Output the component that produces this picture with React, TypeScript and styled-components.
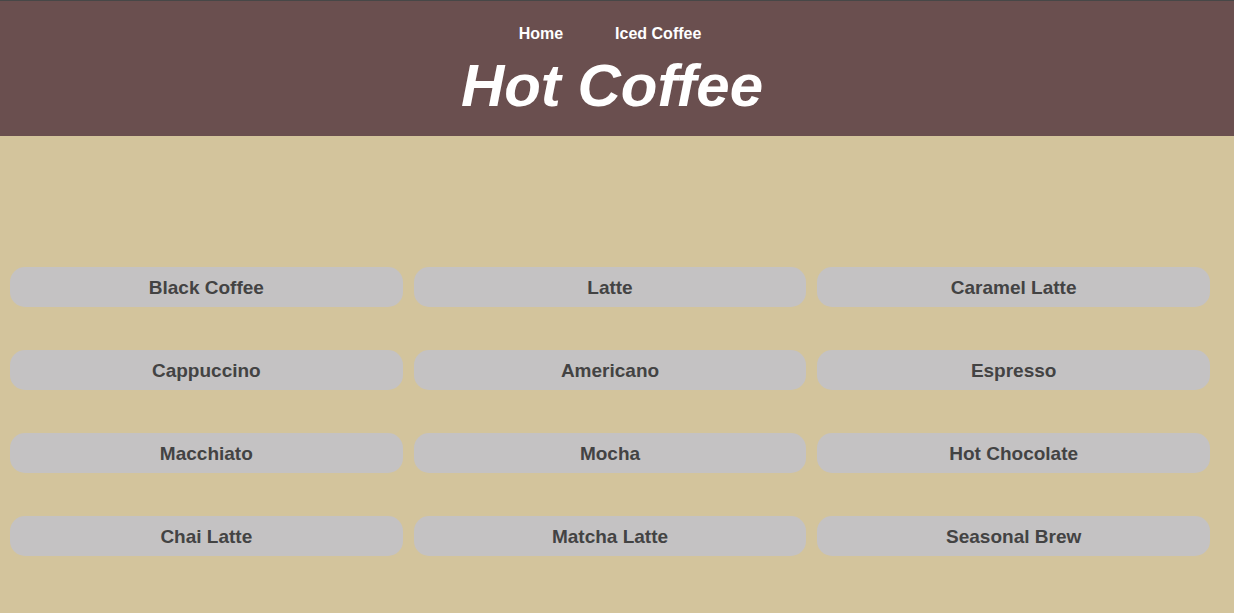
import React from "react";
import styled, { createGlobalStyle } from "styled-components";

const GlobalStyle = createGlobalStyle`
  html, body {
    margin: 0;
    padding: 0;
    background: #d3c49c;
    font-family: "Liberation Sans", Arial, sans-serif;
  }
  * { box-sizing: border-box; }
`;

const Page = styled.div`
  min-height: 613px;
  background: #d3c49c;
`;

const Header = styled.header`
  background: #6a4f4f;
  border-top: 1px solid #474747;
  height: 136px;
  padding-top: 24px;
`;

const Inner = styled.div`
  width: 1220px;
  display: flex;
  flex-direction: column;
  align-items: center;
`;

const Nav = styled.nav`
  display: flex;
  gap: 52px;
  height: 18px;
`;

const NavLink = styled.a`
  color: #ffffff;
  font-weight: bold;
  font-size: 16px;
  line-height: 18px;
  text-decoration: none;
`;

const Title = styled.h1`
  margin: 13px 0 0 4px;
  color: #ffffff;
  font-size: 60px;
  line-height: 60px;
  font-weight: bold;
  font-style: italic;
`;

const Grid = styled.main`
  width: 1220px;
  padding: 131px 10px 0;
  display: grid;
  grid-template-columns: repeat(3, 1fr);
  column-gap: 11px;
  row-gap: 43px;
`;

const Item = styled.div`
  height: 40px;
  padding-top: 2px;
  background: #c4c2c3;
  border-radius: 15px;
  display: flex;
  align-items: center;
  justify-content: center;
  color: #434343;
  font-weight: bold;
  font-size: 19px;
`;

const drinks = [
  "Black Coffee",
  "Latte",
  "Caramel Latte",
  "Cappuccino",
  "Americano",
  "Espresso",
  "Macchiato",
  "Mocha",
  "Hot Chocolate",
  "Chai Latte",
  "Matcha Latte",
  "Seasonal Brew",
];

export default function App() {
  return (
    <Page>
      <GlobalStyle />
      <Header>
        <Inner>
          <Nav>
            <NavLink href="#">Home</NavLink>
            <NavLink href="#">Iced Coffee</NavLink>
          </Nav>
          <Title>Hot Coffee</Title>
        </Inner>
      </Header>
      <Grid>
        {drinks.map((d) => (
          <Item key={d}>{d}</Item>
        ))}
      </Grid>
    </Page>
  );
}
